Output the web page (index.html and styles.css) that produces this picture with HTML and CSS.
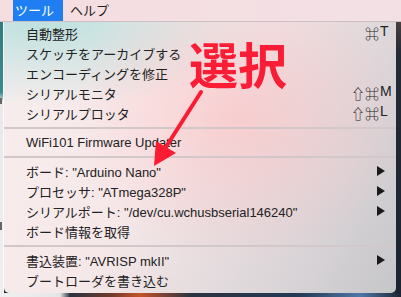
FILE: index.html
```html
<!DOCTYPE html>
<html lang="ja">
<head>
    <meta charset="UTF-8">
    <meta name="viewport" content="width=device-width, initial-scale=1.0">
    <title>ツール</title>
    <link rel="stylesheet" href="styles.css">
</head>
<body>
    <div class="menubar">
        <div class="menubar-item active">ツール</div>
        <div class="menubar-item">ヘルプ</div>
    </div>
    <div class="screen">
        <div class="edge-left">
            <span class="edge-mark m1"></span>
            <span class="edge-mark m2"></span>
        </div>
        <div class="menu">
            <div class="item">自動整形<span class="shortcut"><span class="mods">⌘</span><span class="key">T</span></span></div>
            <div class="item">スケッチをアーカイブする</div>
            <div class="item">エンコーディングを修正</div>
            <div class="item">シリアルモニタ<span class="shortcut"><span class="mods">⇧⌘</span><span class="key">M</span></span></div>
            <div class="item">シリアルプロッタ<span class="shortcut"><span class="mods">⇧⌘</span><span class="key">L</span></span></div>
            <div class="sep"></div>
            <div class="item">WiFi101 Firmware Updater</div>
            <div class="sep"></div>
            <div class="item">ボード: "Arduino Nano"<span class="arrow"></span></div>
            <div class="item">プロセッサ: "ATmega328P"<span class="arrow"></span></div>
            <div class="item">シリアルポート: "/dev/cu.wchusbserial146240"<span class="arrow"></span></div>
            <div class="item">ボード情報を取得</div>
            <div class="sep"></div>
            <div class="item">書込装置: "AVRISP mkII"<span class="arrow"></span></div>
            <div class="item">ブートローダを書き込む</div>
        </div>
        <div class="edge-right"></div>
    </div>
    <div class="edge-bottom"></div>

    <div class="callout">選択</div>
    <svg class="pointer" width="401" height="297" viewBox="0 0 401 297">
        <line x1="201" y1="92" x2="164" y2="150" stroke="#fb1b32" stroke-width="4" stroke-linecap="round"/>
        <polygon points="154,166 156,141 176,153" fill="#fb1b32"/>
    </svg>
</body>
</html>
```

FILE: styles.css
```css
body {
    margin: 0;
    width: 401px;
    height: 297px;
    overflow: hidden;
    position: relative;
    background-color: #1c2530;
    font-family: 'Liberation Sans', 'Noto Sans CJK JP', sans-serif;
    font-size: 13px;
    color: #222;
}

.menubar {
    display: flex;
    height: 21px;
    background: linear-gradient(to right, #f6dde0, #f2e0e5);
    border-bottom: 1px solid #cdbfc3;
    padding-left: 13px;
}

.menubar-item {
    padding: 0 8px 0 0;
    line-height: 21px;
    color: #1e1e1e;
    white-space: nowrap;
}

.menubar-item.active {
    background-color: #1f7ff2;
    color: #fff;
    padding: 0 9px 0 2px;
    margin-right: 7px;
}

.screen {
    display: flex;
    height: 271px;
}

.edge-left {
    width: 3px;
    position: relative;
    background: linear-gradient(to bottom, #2c7f7f 0, #3b8a8a 70px, #e9e9e9 80px, #efefef 100%);
    border-right: 1px solid #fafafa;
}

.edge-mark {
    position: absolute;
    left: 0;
    width: 2px;
    background-color: #666;
}

.m1 { top: 76px; height: 6px; }
.m2 { top: 200px; height: 8px; }

.menu {
    width: 392px;
    padding-top: 1px;
    border-radius: 0 0 5px 5px;
    background:
        radial-gradient(ellipse 170px 150px at 235px 95px, rgba(255, 192, 194, 0.6), rgba(255, 200, 200, 0) 100%),
        radial-gradient(ellipse 230px 85px at 40px 0px, rgba(186, 224, 222, 0.95), rgba(200, 228, 226, 0) 100%),
        linear-gradient(118deg, #f8eeee 0%, #f6e8e9 40%, #dcd6d9 75%, #c6c6c9 100%);
}

.item {
    display: flex;
    align-items: center;
    height: 20px;
    padding-left: 22px;
    white-space: nowrap;
}

.shortcut {
    margin-left: auto;
    display: flex;
    font-size: 14px;
}

.mods {
    text-align: right;
}

.key {
    width: 16px;
    padding-left: 1px;
}

.arrow {
    margin-left: auto;
    margin-right: 11px;
    width: 0;
    height: 0;
    border-top: 5px solid transparent;
    border-bottom: 5px solid transparent;
    border-left: 8px solid #1a1a1a;
}

.sep {
    height: 2px;
    margin: 4px 0 3px;
    background-color: #d2c8ca;
}

.edge-right {
    width: 5px;
    background: linear-gradient(to bottom, #4a3f3f 0, #222b36 30px, #1b2430 100%);
}

.edge-bottom {
    height: 5px;
    background: linear-gradient(to right, #f0f0f0 0, #e6e6e6 60px, #2a3340 70px, #6b3a2a 110px, #c4522a 140px, #2a3340 190px, #253a55 300px, #4f78a8 360px, #1c2530 401px);
}

.callout {
    position: absolute;
    left: 189px;
    top: 31px;
    font-family: 'Noto Sans CJK JP', sans-serif;
    font-size: 49px;
    font-weight: bold;
    color: #fb1d36;
    line-height: 1.3;
}

.pointer {
    position: absolute;
    left: 0;
    top: 0;
}
```
